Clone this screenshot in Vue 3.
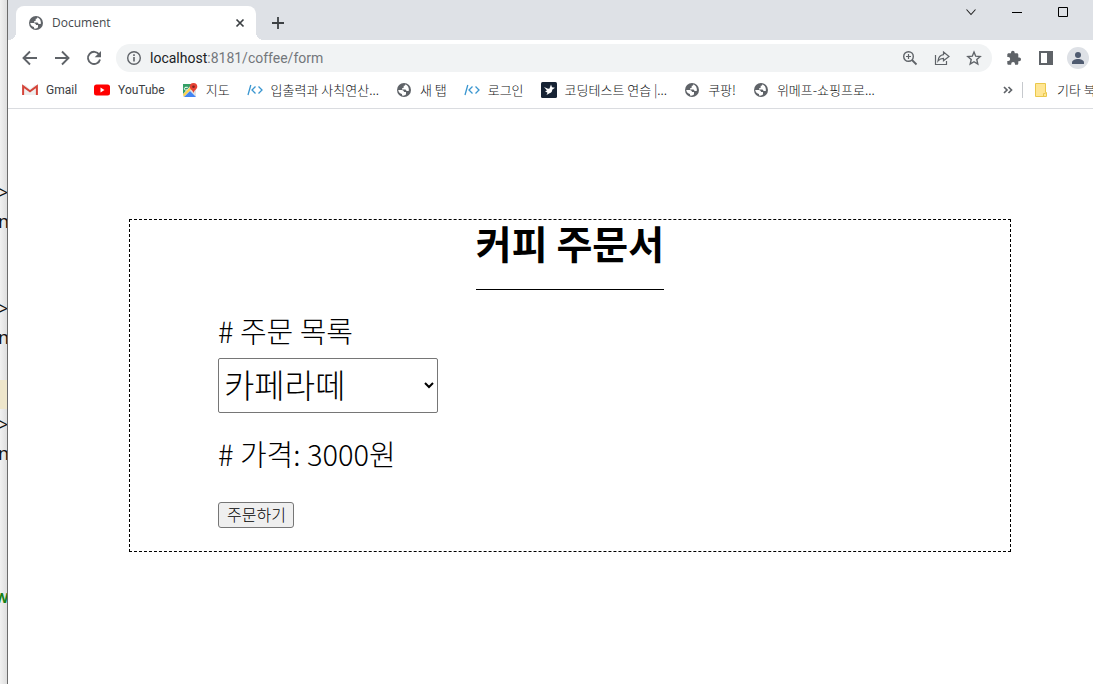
<script setup>
import { ref, computed } from 'vue'

const lines = ['>', 'n', '', '', '>', 'n', '', '', '>', 'n', '', '', '', '', 'W']

const bookmarks = [
  { icon: 'gmail', label: 'Gmail', latin: true },
  { icon: 'youtube', label: 'YouTube', latin: true },
  { icon: 'maps', label: '지도' },
  { icon: 'code', label: '입출력과 사칙연산...' },
  { icon: 'globe', label: '새 탭' },
  { icon: 'code', label: '로그인' },
  { icon: 'bird', label: '코딩테스트 연습 |...' },
  { icon: 'globe', label: '쿠팡!' },
  { icon: 'globe', label: '위메프-쇼핑프로...' },
]

const menu = [
  { name: '아메리카노', price: 2000 },
  { name: '카페라떼', price: 3000 },
  { name: '카푸치노', price: 3500 },
]
const selected = ref('카페라떼')
const price = computed(() => menu.find((m) => m.name === selected.value).price)
</script>

<template>
  <div class="desktop">
    <div class="editor">
      <div v-for="(line, i) in lines" :key="i" class="code" :class="{ current: i === 7, keyword: line === 'W' }">{{ line }}</div>
    </div>

    <div class="browser">
      <header class="tabstrip">
        <div class="tab">
          <svg class="i16" viewBox="0 0 16 16"><circle cx="8" cy="8" r="7" fill="#5f6368" /><path d="M2.200 8h3.600c1.400 0 2.200 1 2.200 2h2v2.200c-1 1.300-2.400 1.700-4 1.300v-1.500c-1.900-.2-3.500-1.700-3.800-4zM9.500 2.300c-.2 1-.8 1.500-1.800 1.500v1.500c0 .8-.9 1-1.700 1v1.100h3.500l1.200 1.600h2c.5-1.800-.1-3.900-1.300-5.200z" fill="#fff" /></svg>
          <span class="tab-title">Document</span>
          <button class="plain i16" aria-label="탭 닫기">
            <svg class="i16" viewBox="0 0 16 16"><path d="M4.500 4.500l7 7M11.500 4.500l-7 7" stroke="#3c4043" stroke-width="1.700" /></svg>
          </button>
        </div>
        <button class="plain newtab i16" aria-label="새 탭">
          <svg class="i16" viewBox="0 0 16 16"><path d="M8 2v12M2 8h12" stroke="#3c4043" stroke-width="1.800" /></svg>
        </button>
        <div class="window-controls">
          <button class="plain i16" aria-label="탭 검색"><svg class="i16" viewBox="0 0 16 16"><path d="M3.500 5.500l4.500 5 4.500-5" fill="none" stroke="#222" stroke-width="1.100" /></svg></button>
          <button class="plain i16" aria-label="최소화"><svg class="i16" viewBox="0 0 16 16"><path d="M3 8.500h10" stroke="#000" /></svg></button>
          <button class="plain i16" aria-label="최대화"><svg class="i16" viewBox="0 0 16 16"><path d="M3.500 3.500h9v9h-9z" fill="none" stroke="#000" /></svg></button>
        </div>
      </header>

      <nav class="toolbar" aria-label="탐색">
        <button class="plain i16" aria-label="뒤로"><svg class="i16" viewBox="0 0 16 16"><path d="M15 8H2M8 1.500L1.500 8 8 14.500" fill="none" stroke="#5f6368" stroke-width="1.900" /></svg></button>
        <button class="plain i16" aria-label="앞으로"><svg class="i16" viewBox="0 0 16 16"><path d="M1 8h13M8 1.500L14.500 8 8 14.500" fill="none" stroke="#5f6368" stroke-width="1.900" /></svg></button>
        <button class="plain i16" aria-label="새로고침"><svg class="i16" viewBox="0 0 16 16"><path d="M13.200 4.600A6.100 6.100 0 1 0 14 9.400" fill="none" stroke="#5f6368" stroke-width="1.900" /><path d="M15 1v6.300H8.700z" fill="#5f6368" /></svg></button>
        <div class="omnibox">
          <svg class="i16" viewBox="0 0 16 16"><circle cx="8" cy="8" r="6.300" fill="none" stroke="#5f6368" stroke-width="1.400" /><path d="M8 7v4.500M8 4.300v1.600" stroke="#5f6368" stroke-width="1.600" /></svg>
          <a class="url" href="#"><span class="host">localhost</span>:8181/coffee/form</a>
          <button class="plain i16" aria-label="확대"><svg class="i16" viewBox="0 0 16 16"><circle cx="6.500" cy="6.500" r="4.800" fill="none" stroke="#5f6368" stroke-width="1.400" /><path d="M10 10l4.500 4.500" stroke="#5f6368" stroke-width="1.800" /><path d="M4 6.500h5M6.500 4v5" stroke="#5f6368" stroke-width="1.200" /></svg></button>
          <button class="plain i16" aria-label="공유"><svg class="i16" viewBox="0 0 16 16"><path d="M1.500 5v9.500h11V11" fill="none" stroke="#5f6368" stroke-width="1.200" /><path d="M9.500 2l5.500 4.500-5.500 4.300V8.300c-2.500 0-4 .8-5.500 2.700.4-3.500 2.200-5.900 5.500-6.300z" fill="none" stroke="#5f6368" stroke-width="1.200" /></svg></button>
          <button class="plain i16" aria-label="북마크 추가"><svg class="i16" viewBox="0 0 16 16"><path d="M8 2l1.700 4.200 4.500.4-3.400 3 1 4.400L8 11.700 4.200 14l1-4.400-3.400-3 4.500-.4z" fill="none" stroke="#5f6368" stroke-width="1.400" /></svg></button>
        </div>
        <button class="plain i16" aria-label="확장 프로그램"><svg class="i16" viewBox="0 0 16 16"><path d="M13.200 7.500h-.9V4.700c0-.8-.6-1.400-1.400-1.400H8.700v-.6a1.850 1.850 0 0 0-3.700 0v.6H2.700c-.8 0-1.400.6-1.400 1.400v2.400h1a1.900 1.900 0 0 1 0 3.800h-1v2.500c0 .8.6 1.400 1.400 1.400h2.500v-.9a1.900 1.900 0 0 1 3.800 0v.9h1.900c.8 0 1.400-.6 1.400-1.400v-2.200h.9a1.850 1.850 0 0 0 0-3.700z" fill="#5f6368" /></svg></button>
        <button class="plain i16" aria-label="측면 패널"><svg class="i16" viewBox="0 0 16 16"><path d="M1 1h14v14H1zM3 3v10h6V3z" fill="#5f6368" fill-rule="evenodd" /></svg></button>
        <button class="plain avatar" aria-label="프로필"><svg class="i16" viewBox="0 0 16 16"><circle cx="8" cy="5" r="3" fill="#4f5b70" /><path d="M2 14v-1.500C2 10.300 5 9 8 9s6 1.300 6 3.500V14z" fill="#4f5b70" /></svg></button>
      </nav>

      <nav class="bookmarks" aria-label="북마크">
        <a v-for="b in bookmarks" :key="b.label" class="bookmark" :class="{ latin: b.latin }" href="#">
          <svg v-if="b.icon === 'gmail'" class="i16" viewBox="0 0 16 16"><path d="M1 3h2.200L8 7l4.800-4H15v10H1z" fill="#eee" /><path d="M1.100 13V4.200L8 9.300l6.900-5.100V13" fill="none" stroke="#d5453a" stroke-width="2" /></svg>
          <svg v-else-if="b.icon === 'youtube'" class="i16" viewBox="0 0 16 16"><rect y="2.500" width="16" height="11" rx="2.500" fill="#f00" /><path d="M6.500 5.500v5l4-2.500z" fill="#fff" /></svg>
          <svg v-else-if="b.icon === 'maps'" class="i16" viewBox="0 0 16 16"><rect x="1" y="2" width="13" height="13" rx="1" fill="#e0e2e4" /><path d="M1 2h9L1 12z" fill="#34a066" /><path d="M2 15l6-6 6 6z" fill="#4285f4" /><path d="M1 12.500L11 2.500l1.500 1.500L2 14.500z" fill="#fbd24b" /><path d="M5.800 5.300H4a1.400 1.400 0 1 0 1 2" fill="none" stroke="#fff" /><path d="M11.500 1a3.800 3.800 0 0 0-3.800 3.800c0 2.500 3 3.200 3.800 6.200.8-3 3.800-3.700 3.800-6.200A3.800 3.800 0 0 0 11.500 1z" fill="#e64335" /><circle cx="11.500" cy="4.700" r="1.300" fill="#7d241f" /></svg>
          <svg v-else-if="b.icon === 'code'" class="i16" viewBox="0 0 16 16"><path d="M3.800 3L1 13M8.500 4.500L5 8l3.500 3.500M11.500 4.500L15 8l-3.500 3.500" fill="none" stroke="#3a96d0" stroke-width="1.300" /></svg>
          <svg v-else-if="b.icon === 'bird'" class="i16" viewBox="0 0 16 16"><rect width="16" height="16" rx="1.500" fill="#172334" /><path d="M3 5l4 1.700 1.500-.3L10 2.500l1 2.700 3 .6-2.800 2c0 2-.8 3-2.700 3.500L5.500 13l1-2.300-2.500-1.500 2-.7z" fill="#fff" /></svg>
          <svg v-else class="i16" viewBox="0 0 16 16"><circle cx="8" cy="8" r="7" fill="#5f6368" /><path d="M2.200 8h3.600c1.400 0 2.200 1 2.200 2h2v2.200c-1 1.300-2.400 1.700-4 1.300v-1.500c-1.900-.2-3.500-1.700-3.800-4zM9.500 2.300c-.2 1-.8 1.500-1.800 1.500v1.500c0 .8-.9 1-1.700 1v1.100h3.500l1.200 1.600h2c.5-1.800-.1-3.900-1.300-5.200z" fill="#fff" /></svg>
          <span>{{ b.label }}</span>
        </a>
        <div class="more">
          <button class="plain i16" aria-label="북마크 더보기"><svg class="i16" viewBox="0 0 16 16"><path d="M4 5l3 3-3 3M8.500 5l3 3-3 3" fill="none" stroke="#5f6368" stroke-width="1.700" /></svg></button>
          <span class="divider"></span>
          <a class="bookmark other" href="#">
            <svg class="i16" viewBox="0 0 16 16"><path d="M2.500 1.500h10v9h1v4h-11z" fill="#ffe694" stroke="#eac84c" /><path d="M10.500 14.500v-3h2" fill="none" stroke="#eac84c" /></svg>
            <span>기타 북마크</span>
          </a>
        </div>
      </nav>

      <main class="page">
        <section class="order">
          <h1>커피 주문서</h1>
          <form @submit.prevent>
            <label for="coffee"># 주문 목록</label>
            <select id="coffee" v-model="selected">
              <option v-for="m in menu" :key="m.name">{{ m.name }}</option>
            </select>
            <p># 가격: {{ price }}원</p>
            <button class="submit" type="submit">주문하기</button>
          </form>
        </section>
      </main>
    </div>
  </div>
</template>

<style>
body {
  margin: 0;
}
</style>

<style scoped>
* {
  box-sizing: border-box;
}
.desktop {
  display: flex;
  height: 100vh;
  overflow: hidden;
  background: #fff;
  font-family: "Noto Sans CJK KR", sans-serif;
}
.editor {
  flex: none;
  width: 8px;
  padding-top: 177px;
  overflow: hidden;
  border-right: 1px solid #6b6b6b;
  background: linear-gradient(90deg, #f1f1f1, #dedede);
}
.code {
  height: 29px;
  font: 18px/30px "Noto Sans", sans-serif;
  color: #111;
  text-indent: -2px;
}
.current {
  background: #eee6cb;
}
.keyword {
  color: #158015;
  font-weight: 700;
  font-size: 14px;
  text-indent: -5px;
}
.browser {
  flex: 1;
  min-width: 0;
  display: flex;
  flex-direction: column;
}
.i16 {
  flex: none;
  display: block;
  width: 16px;
  height: 16px;
}
.plain {
  padding: 0;
  border: 0;
  background: none;
}
.tabstrip {
  display: flex;
  height: 40px;
  padding: 6px 22px 0 8px;
  background: #dee1e6;
}
.tab {
  position: relative;
  display: flex;
  align-items: center;
  gap: 8px;
  width: 240px;
  padding: 0 8px 0 12px;
  border-radius: 8px 8px 0 0;
  background: #fff;
}
.tab::before,
.tab::after {
  content: "";
  position: absolute;
  bottom: 0;
  width: 8px;
  height: 8px;
}
.tab::before {
  left: -8px;
  background: radial-gradient(circle at 0 0, transparent 8px, #fff 8px);
}
.tab::after {
  right: -8px;
  background: radial-gradient(circle at 100% 0, transparent 8px, #fff 8px);
}
.tab-title {
  flex: 1;
  font: 12px/16px "Open Sans", sans-serif;
  color: #45494d;
}
.newtab {
  align-self: center;
  margin-left: 14px;
}
.window-controls {
  display: flex;
  gap: 30px;
  height: 12px;
  align-items: center;
  margin-left: auto;
}
.toolbar {
  display: flex;
  align-items: center;
  gap: 16px;
  height: 36px;
  padding: 0 4px 0 14px;
}
.omnibox {
  flex: 1;
  display: flex;
  align-items: center;
  gap: 16px;
  height: 28px;
  margin-left: -2px;
  margin-right: -2px;
  padding: 0 10px;
  border-radius: 14px;
  background: #f1f3f4;
}
.url {
  flex: 1;
  margin-left: -8px;
  font: 14px/20px Roboto, sans-serif;
  color: #73777b;
  text-decoration: none;
}
.host {
  color: #202124;
}
.avatar {
  flex: none;
  display: grid;
  place-items: center;
  width: 22px;
  height: 22px;
  margin-left: -3px;
  border-radius: 50%;
  background: #dee1e6;
}
.bookmarks {
  display: flex;
  align-items: center;
  gap: 17px;
  height: 33px;
  padding: 0 0 5px 14px;
  border-bottom: 1px solid #dadce0;
}
.bookmark {
  display: flex;
  align-items: center;
  gap: 8px;
  font: 300 13px/18px "Noto Sans CJK KR", sans-serif;
  color: #111315;
  text-decoration: none;
  white-space: nowrap;
}
.latin {
  font: 12px/18px Roboto, sans-serif;
  color: #3c4043;
}
.more {
  display: flex;
  align-items: center;
  margin-left: auto;
}
.divider {
  width: 1px;
  height: 16px;
  margin: 0 10px 0 6px;
  background: #c6c9cd;
}
.other {
  width: 60px;
  overflow: hidden;
}
.page {
  padding: 110px 82px 0 121px;
  color: #000;
}
.order {
  display: flex;
  flex-direction: column;
  border: 1px dashed #000;
}
h1 {
  align-self: center;
  margin: 0;
  padding-bottom: 25px;
  border-bottom: 1px solid #000;
  font-size: 39px;
  line-height: 44px;
}
form {
  display: flex;
  flex-direction: column;
  align-items: flex-start;
  padding: 21px 10% 23px;
}
label,
p {
  margin: 0;
  padding-bottom: 2px;
  font-weight: 300;
  font-size: 29px;
  line-height: 38px;
}
select {
  width: 220px;
  height: 55px;
  margin: 7px 0 21px;
  padding: 0 2px 6px 1px;
  border: 1px solid #767676;
  border-radius: 2px;
  background-color: #fff;
  color: #000;
  font: 300 33px/48px "Noto Sans CJK KR", sans-serif;
}
.submit {
  height: 26px;
  margin-top: 28px;
  padding: 0 7px 2px 8px;
  border: 1px solid #767676;
  border-radius: 3px;
  background: #efefef;
  color: #000;
  font: 300 16px/22px "Noto Sans CJK KR", sans-serif;
}
</style>
